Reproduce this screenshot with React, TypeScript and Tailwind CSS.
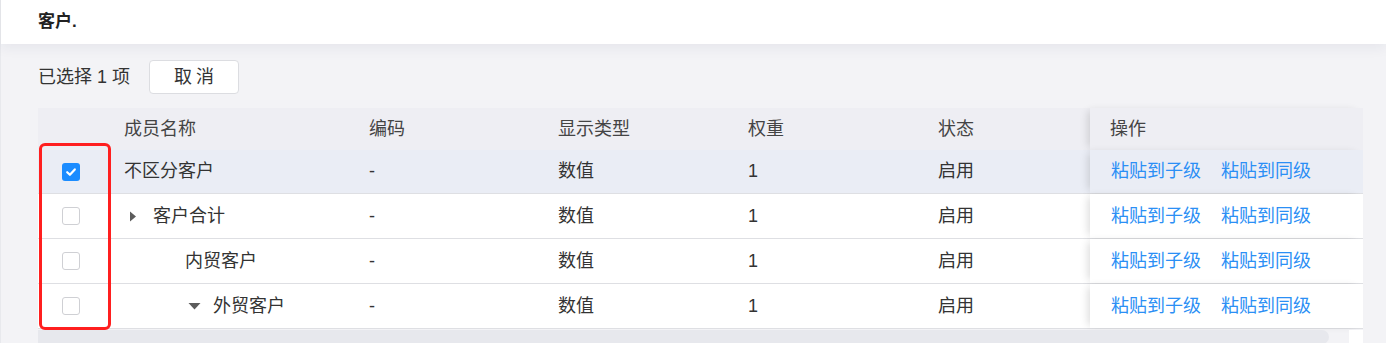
import React from "react";

const font = { fontFamily: '"Liberation Sans", "Noto Sans CJK SC", sans-serif' };

function Checkbox({ checked }: { checked?: boolean }) {
  if (checked) {
    return (
      <div className="w-[18px] h-[18px] rounded-[3px] bg-[#1b8cff] flex items-center justify-center">
        <svg width="12" height="12" viewBox="0 0 12 12">
          <path d="M2.2 6.2 L4.9 8.8 L9.8 3.4" fill="none" stroke="#fff" strokeWidth="2.2" strokeLinecap="round" strokeLinejoin="round" />
        </svg>
      </div>
    );
  }
  return <div className="w-[18px] h-[18px] rounded-[3px] bg-white border border-[#cfd0d4]" />;
}

function CaretRight() {
  return (
    <svg width="8" height="11" viewBox="0 0 8 11">
      <path d="M1 0.5 L7 5.5 L1 10.5 Z" fill="#5c5c5c" />
    </svg>
  );
}

function CaretDown() {
  return (
    <svg width="13" height="8" viewBox="0 0 13 8">
      <path d="M0.5 1 L12.5 1 L6.5 7.5 Z" fill="#5c5c5c" />
    </svg>
  );
}

type Row = {
  name: string;
  checked?: boolean;
  kind: "root" | "expand" | "leaf" | "open";
};

const rows: Row[] = [
  { name: "不区分客户", checked: true, kind: "root" },
  { name: "客户合计", kind: "expand" },
  { name: "内贸客户", kind: "leaf" },
  { name: "外贸客户", kind: "open" },
];

function NameCell({ row }: { row: Row }) {
  if (row.kind === "root") {
    return <div className="w-[245px] pl-[14px] flex items-center">{row.name}</div>;
  }
  if (row.kind === "expand") {
    return (
      <div className="w-[245px] pl-[19px] flex items-center">
        <CaretRight />
        <span className="ml-[16px]">{row.name}</span>
      </div>
    );
  }
  if (row.kind === "leaf") {
    return <div className="w-[245px] pl-[75px] flex items-center">{row.name}</div>;
  }
  return (
    <div className="w-[245px] pl-[78px] flex items-center">
      <CaretDown />
      <span className="ml-[12px]">{row.name}</span>
    </div>
  );
}

export default function App() {
  return (
    <div
      className="w-[1386px] h-[343px] overflow-hidden bg-[#f3f3f6] text-[18px] text-[#333]"
      style={font}
    >
      <div className="h-[44px] bg-white border-l border-[#e3e4e8] pl-[37px] flex items-center shadow-[0_3px_14px_rgba(30,40,80,0.07)] relative z-10">
        <span className="font-bold text-[17px] text-[#222]">客户.</span>
      </div>

      <div className="relative border-l border-[#e8e9ed] h-[299px]">
        <div className="flex items-center pl-[37px] pt-[16px] h-[50px]">
          <span className="text-[#333]">已选择 1 项</span>
          <button className="ml-[19px] w-[90px] h-[34px] bg-white border border-[#dcdde1] rounded-[4px] text-[#333] tracking-[4px] pl-[4px]">
            取消
          </button>
        </div>

        <div className="ml-[37px] mt-[14px] w-[1325px]">
          {/* header */}
          <div className="flex h-[42px] bg-[#eeeef3] text-[#444] items-center">
            <div className="w-[72px]" />
            <div className="w-[245px] pl-[14px]">成员名称</div>
            <div className="w-[189px] pl-[14px]">编码</div>
            <div className="w-[190px] pl-[14px]">显示类型</div>
            <div className="w-[190px] pl-[14px]">权重</div>
            <div className="w-[166px] pl-[14px] h-full flex items-center">状态</div>
            <div className="flex-1 h-full pl-[20px] flex items-center bg-[#eeeef3] shadow-[-5px_0_8px_-3px_rgba(0,0,0,0.14)]">
              操作
            </div>
          </div>
          {rows.map((r, i) => (
            <div
              key={i}
              className={`flex ${i === 0 ? "h-[44px]" : "h-[45px]"} border-b border-[#dedfe3] ${r.checked ? "bg-[#eaedf5]" : "bg-white"}`}
            >
              <div className="w-[72px] flex items-center pl-[24px]">
                <Checkbox checked={r.checked} />
              </div>
              <NameCell row={r} />
              <div className="w-[189px] pl-[14px] flex items-center">-</div>
              <div className="w-[190px] pl-[14px] flex items-center">数值</div>
              <div className="w-[190px] pl-[14px] flex items-center">1</div>
              <div className="w-[166px] pl-[14px] flex items-center">启用</div>
              <div
                className={`flex-1 pl-[21px] flex items-center gap-[20px] text-[#2b8ff5] shadow-[-5px_0_8px_-3px_rgba(0,0,0,0.14)] ${r.checked ? "bg-[#eaedf5]" : "bg-white"}`}
              >
                <span>粘贴到子级</span>
                <span>粘贴到同级</span>
              </div>
            </div>
          ))}
          <div className="flex h-[16px] items-start pt-[1px]">
            <div className="w-[1306px] h-[14px] rounded-r-full rounded-l-[6px] bg-[#e7e8ed]" />
            <div className="ml-[20px] w-[14px] h-[16px] bg-white" />
          </div>
        </div>

        {/* annotation */}
        <div className="absolute left-[38px] top-[99px] w-[72px] h-[187px] border-[3px] border-[#ff1f1f] rounded-[6px] pointer-events-none" />
      </div>
    </div>
  );
}
